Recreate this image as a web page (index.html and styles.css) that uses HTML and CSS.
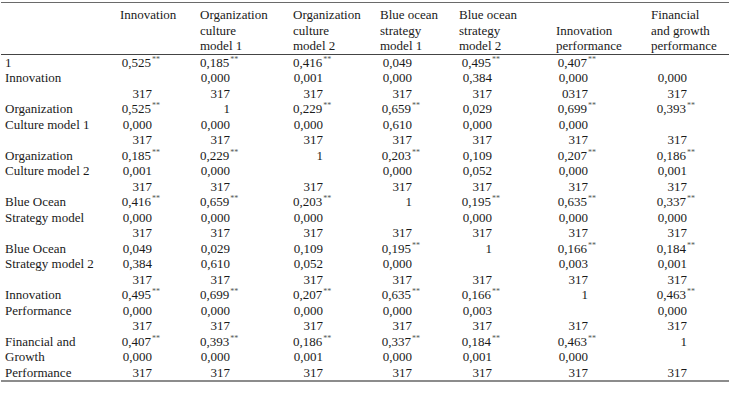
FILE: index.html
```html
<!DOCTYPE html>
<html lang="en">
<head>
<meta charset="utf-8">
<title>Correlation analysis</title>
<link rel="stylesheet" href="styles.css">
</head>
<body>
<table class="corr">
  <colgroup>
    <col class="c0"><col class="c1"><col class="c2"><col class="c3"><col class="c4"><col class="c5"><col class="c6"><col class="c7">
  </colgroup>
  <thead>
    <tr>
      <th></th>
      <th class="top">Innovation</th>
      <th>Organization<br>culture<br>model 1</th>
      <th>Organization<br>culture<br>model 2</th>
      <th>Blue ocean<br>strategy<br>model 1</th>
      <th>Blue ocean<br>strategy<br>model 2</th>
      <th>Innovation<br>performance</th>
      <th>Financial<br>and growth<br>performance</th>
    </tr>
  </thead>
  <tbody>
    <tr><td>1</td><td>0,525<span class="sig">**</span></td><td>0,185<span class="sig">**</span></td><td>0,416<span class="sig">**</span></td><td>0,049</td><td>0,495<span class="sig">**</span></td><td>0,407<span class="sig">**</span></td><td></td></tr>
    <tr><td>Innovation</td><td></td><td>0,000</td><td>0,001</td><td>0,000</td><td>0,384</td><td>0,000</td><td>0,000</td></tr>
    <tr><td></td><td>317</td><td>317</td><td>317</td><td>317</td><td>317</td><td>0317</td><td>317</td></tr>

    <tr><td>Organization</td><td>0,525<span class="sig">**</span></td><td>1</td><td>0,229<span class="sig">**</span></td><td>0,659<span class="sig">**</span></td><td>0,029</td><td>0,699<span class="sig">**</span></td><td>0,393<span class="sig">**</span></td></tr>
    <tr><td>Culture model 1</td><td>0,000</td><td>0,000</td><td>0,000</td><td>0,610</td><td>0,000</td><td>0,000</td><td></td></tr>
    <tr><td></td><td>317</td><td>317</td><td>317</td><td>317</td><td>317</td><td>317</td><td>317</td></tr>

    <tr><td>Organization</td><td>0,185<span class="sig">**</span></td><td>0,229<span class="sig">**</span></td><td>1</td><td>0,203<span class="sig">**</span></td><td>0,109</td><td>0,207<span class="sig">**</span></td><td>0,186<span class="sig">**</span></td></tr>
    <tr><td>Culture model 2</td><td>0,001</td><td>0,000</td><td></td><td>0,000</td><td>0,052</td><td>0,000</td><td>0,001</td></tr>
    <tr><td></td><td>317</td><td>317</td><td>317</td><td>317</td><td>317</td><td>317</td><td>317</td></tr>

    <tr><td>Blue Ocean</td><td>0,416<span class="sig">**</span></td><td>0,659<span class="sig">**</span></td><td>0,203<span class="sig">**</span></td><td>1</td><td>0,195<span class="sig">**</span></td><td>0,635<span class="sig">**</span></td><td>0,337<span class="sig">**</span></td></tr>
    <tr><td>Strategy model</td><td>0,000</td><td>0,000</td><td>0,000</td><td></td><td>0,000</td><td>0,000</td><td>0,000</td></tr>
    <tr><td></td><td>317</td><td>317</td><td>317</td><td>317</td><td>317</td><td>317</td><td>317</td></tr>

    <tr><td>Blue Ocean</td><td>0,049</td><td>0,029</td><td>0,109</td><td>0,195<span class="sig">**</span></td><td>1</td><td>0,166<span class="sig">**</span></td><td>0,184<span class="sig">**</span></td></tr>
    <tr><td>Strategy model 2</td><td>0,384</td><td>0,610</td><td>0,052</td><td>0,000</td><td></td><td>0,003</td><td>0,001</td></tr>
    <tr><td></td><td>317</td><td>317</td><td>317</td><td>317</td><td>317</td><td>317</td><td>317</td></tr>

    <tr><td>Innovation</td><td>0,495<span class="sig">**</span></td><td>0,699<span class="sig">**</span></td><td>0,207<span class="sig">**</span></td><td>0,635<span class="sig">**</span></td><td>0,166<span class="sig">**</span></td><td>1</td><td>0,463<span class="sig">**</span></td></tr>
    <tr><td>Performance</td><td>0,000</td><td>0,000</td><td>0,000</td><td>0,000</td><td>0,003</td><td></td><td>0,000</td></tr>
    <tr><td></td><td>317</td><td>317</td><td>317</td><td>317</td><td>317</td><td>317</td><td>317</td></tr>

    <tr><td>Financial and</td><td>0,407<span class="sig">**</span></td><td>0,393<span class="sig">**</span></td><td>0,186<span class="sig">**</span></td><td>0,337<span class="sig">**</span></td><td>0,184<span class="sig">**</span></td><td>0,463<span class="sig">**</span></td><td>1</td></tr>
    <tr><td>Growth</td><td>0,000</td><td>0,000</td><td>0,001</td><td>0,000</td><td>0,001</td><td>0,000</td><td></td></tr>
    <tr><td>Performance</td><td>317</td><td>317</td><td>317</td><td>317</td><td>317</td><td>317</td><td>317</td></tr>
  </tbody>
</table>
</body>
</html>
```

FILE: styles.css
```css
html, body {
  margin: 0;
  padding: 0;
  background: #ffffff;
}

body {
  font-family: "Liberation Serif", "Times New Roman", serif;
  font-size: 13px;
  color: #1a1a1a;
}

.corr {
  border-collapse: collapse;
  table-layout: fixed;
  width: 728px;
  margin: 2px 0 0 1px;
  border-top: 1px solid #6a6a6a;
  border-bottom: 2px solid #8c8c8c;
}

.c0 { width: 119px; }
.c1 { width: 80px; }
.c2 { width: 93px; }
.c3 { width: 87px; }
.c4 { width: 79px; }
.c5 { width: 97px; }
.c6 { width: 95px; }
.c7 { width: 78px; }

.corr th,
.corr td {
  padding: 0;
  line-height: 15.5px;
  font-weight: normal;
  white-space: nowrap;
}

.corr thead tr {
  border-bottom: 1px solid #444444;
}

.corr thead th {
  text-align: left;
  vertical-align: bottom;
  padding-top: 4px;
}

.corr thead th.top {
  vertical-align: top;
}

.corr tbody td {
  text-align: right;
  vertical-align: top;
}

.corr tbody td:nth-child(1) { text-align: left; padding-left: 4px; }
.corr tbody td:nth-child(2) { padding-right: 48px; }
.corr tbody td:nth-child(3) { padding-right: 63px; }
.corr tbody td:nth-child(4) { padding-right: 57px; }
.corr tbody td:nth-child(5) { padding-right: 47px; }
.corr tbody td:nth-child(6) { padding-right: 64px; }
.corr tbody td:nth-child(7) { padding-right: 63px; }
.corr tbody td:nth-child(8) { padding-right: 42px; }

.sig {
  display: inline-block;
  width: 0;
  padding-left: 1px;
  font-size: 8px;
  line-height: 0;
  vertical-align: 5px;
  color: #555555;
  white-space: nowrap;
}
```
